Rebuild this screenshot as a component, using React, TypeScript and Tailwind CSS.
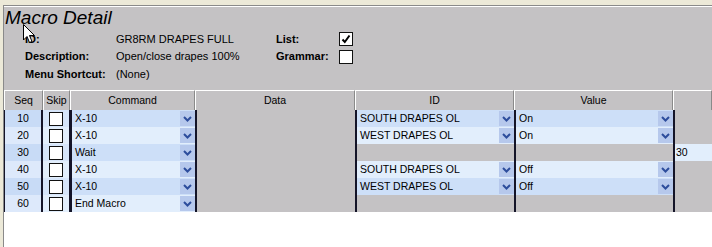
import React from "react"

type Row = {
  seq: number
  command: string
  id?: string
  value?: string
  extra?: string
}

const rows: Row[] = [
  { seq: 10, command: "X-10", id: "SOUTH DRAPES OL", value: "On" },
  { seq: 20, command: "X-10", id: "WEST DRAPES OL", value: "On" },
  { seq: 30, command: "Wait", extra: "30" },
  { seq: 40, command: "X-10", id: "SOUTH DRAPES OL", value: "Off" },
  { seq: 50, command: "X-10", id: "WEST DRAPES OL", value: "Off" },
  { seq: 60, command: "End Macro" },
]

const cols = "grid grid-cols-[39px_27px_125px_160px_159px_159px_1fr]"

function Chevron() {
  return (
    <div className="w-[15px] h-full bg-[#b6c8ec] flex items-center justify-center shrink-0">
      <svg width="9" height="6" viewBox="0 0 9 6">
        <path d="M1 1 L4.5 4.5 L8 1" fill="none" stroke="#2d4d9c" strokeWidth="2" />
      </svg>
    </div>
  )
}

function DropCell({ text, light }: { text: string; light: boolean }) {
  return (
    <div
      className={`border-l-2 border-[#141428] flex items-stretch py-px ${
        light ? "bg-[#e2eefc]" : "bg-[#cddff8]"
      }`}
    >
      <span className="flex-1 pl-[3px] truncate leading-[15px]">{text}</span>
      <Chevron />
    </div>
  )
}

function GreyCell() {
  return <div className="border-l-2 border-[#141428] bg-[#c4c2c4]" />
}

function Box({ checked }: { checked?: boolean }) {
  return (
    <div className="w-[14px] h-[14px] bg-white border-[1.5px] border-[#111] flex items-center justify-center">
      {checked && (
        <svg width="10" height="10" viewBox="0 0 10 10">
          <path d="M1.5 5.5 L3.8 8 L8.5 1.5" fill="none" stroke="#000" strokeWidth="2" />
        </svg>
      )}
    </div>
  )
}

export default function App() {
  const headers = ["Seq", "Skip", "Command", "Data", "ID", "Value", ""]

  return (
    <div className="w-[712px] h-[247px] bg-[#ece9d8] pt-[5px] pl-[3px] overflow-hidden relative font-['Liberation_Sans',Arial,sans-serif] text-[11px] text-black">
      <div className="h-full bg-white border-l border-t border-[#8a8a8a]">
        {/* detail panel */}
        <div className="h-[83px] bg-[#c4c2c4] pl-px">
          <div className="text-[19px] italic leading-[22px] mt-px">Macro Detail</div>
          <div className="grid grid-cols-[91px_160px_63px_20px] pl-[20px] mt-[1.5px] leading-[17.5px]">
            <span className="font-bold">ID:</span>
            <span>GR8RM DRAPES FULL</span>
            <span className="font-bold">List:</span>
            <div className="flex items-center">
              <Box checked />
            </div>
            <span className="font-bold">Description:</span>
            <span>Open/close drapes 100%</span>
            <span className="font-bold">Grammar:</span>
            <div className="flex items-center">
              <Box />
            </div>
            <span className="font-bold">Menu Shortcut:</span>
            <span>(None)</span>
          </div>
        </div>

        {/* grid header */}
        <div className={`${cols} h-[20px] bg-[#c4c2c4] text-[10.5px]`}>
          {headers.map((h, i) => (
            <div
              key={i}
              className="border-t border-l border-r border-t-white border-l-white border-r-[#8a8a8a] flex items-center justify-center"
            >
              {h}
            </div>
          ))}
        </div>

        {/* grid rows */}
        {rows.map((r, i) => {
          const light = i % 2 === 1
          return (
            <div key={r.seq} className={`${cols} h-[17px] border-b border-white text-[10.5px]`}>
              <div
                className={`border-l border-r-2 border-[#141428] flex items-center justify-center ${
                  light ? "bg-[#dde9fb]" : "bg-[#c8dbf6]"
                }`}
              >
                {r.seq}
              </div>
              <div
                className={`border-r border-[#141428] flex items-center justify-center ${
                  light ? "bg-[#e2eefc]" : "bg-[#d6e5fa]"
                }`}
              >
                <div className="w-[14px] h-[14px] bg-white border border-[#111]" />
              </div>
              <DropCell text={r.command} light={light} />
              <GreyCell />
              {r.id ? <DropCell text={r.id} light={light} /> : <GreyCell />}
              {r.value ? <DropCell text={r.value} light={light} /> : <GreyCell />}
              {r.extra ? (
                <div className="border-l-2 border-[#141428] bg-[#e2eefc] pl-px leading-[16px]">{r.extra}</div>
              ) : (
                <GreyCell />
              )}
            </div>
          )
        })}
      </div>

      {/* mouse pointer */}
      <svg className="absolute left-[23px] top-[24px]" width="13" height="20" viewBox="0 0 13 20">
        <path
          d="M0.5 0.5 L0.5 16 L4 12.5 L6.5 18.5 L9 17.5 L6.5 11.5 L11.5 11.5 Z"
          fill="#fff"
          stroke="#000"
          strokeWidth="1"
        />
      </svg>
    </div>
  )
}
